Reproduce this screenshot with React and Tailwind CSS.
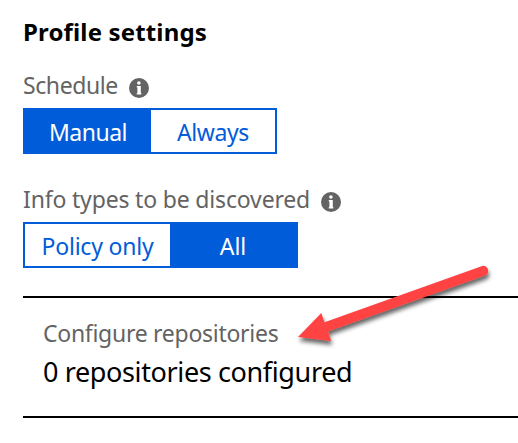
function InfoIcon() {
  return (
    <svg className="block h-5 w-5 shrink-0" viewBox="0 0 20 20">
      <circle cx="10" cy="10" r="10" fill="#636363" />
      <circle cx="9.9" cy="5" r="1.8" fill="#fff" />
      <path d="M7.8 8H11.8v7h.5v1.6H7.8V15h.6V9.5h-.6z" fill="#fff" />
    </svg>
  );
}

export default function App() {
  return (
    <main className="relative h-[443px] w-[518px] overflow-hidden bg-white pl-[23px] font-['Noto_Sans',sans-serif] whitespace-nowrap">
      <h1 className="pt-4 text-[24px] leading-8 font-bold tracking-[0.15px] text-black">Profile settings</h1>

      <div className="mt-[21px] flex h-8 items-center gap-[11px] text-[#636363]">
        <span className="w-[95px] text-[23px] leading-8 tracking-[-0.4px]">Schedule</span>
        <span className="pt-[6px]"><InfoIcon /></span>
      </div>
      <div className="mt-[7px] flex h-[46px] w-[254px] border-2 border-[#015cda] text-[23px] leading-[44px]">
        <div className="w-[126px] bg-[#015cda] text-center tracking-[-0.5px] text-white">Manual</div>
        <div className="flex-1 text-center tracking-[-0.4px] text-[#015cda]">Always</div>
      </div>

      <div className="mt-[29px] flex h-8 items-center gap-[11px] text-[#636363]">
        <span className="w-[287px] text-[23px] leading-8 tracking-[-0.17px]">Info types to be discovered</span>
        <span className="pt-[6px]"><InfoIcon /></span>
      </div>
      <div className="mt-[7px] flex h-[46px] w-[275px] border-2 border-[#015cda] text-[23px] leading-[44px]">
        <div className="w-[145px] text-center tracking-[-0.2px] text-[#015cda]">Policy only</div>
        <div className="flex-1 bg-[#015cda] text-center text-white">All</div>
      </div>

      <section className="mt-7 h-[122px] border-y-2 border-black pt-[19px] pl-5">
        <div className="text-[23px] leading-8 tracking-[-0.28px] text-[#636363]">Configure repositories</div>
        <div className="mt-[5px] text-[27px] leading-9 tracking-[-0.37px] text-black">0 repositories configured</div>
      </section>

      <svg className="absolute top-[250px] left-[280px] h-[110px] w-[238px]" viewBox="280 250 238 110">
        <defs>
          <filter id="arrow-shadow" x="-10%" y="-20%" width="120%" height="150%">
            <feDropShadow dx="1" dy="4" stdDeviation="2.2" floodColor="#000" floodOpacity="0.6" />
          </filter>
        </defs>
        <path
          d="M298 337L321.3 313L324.5 322.2L481.5 266.2A5 5 0 0 1 485 275.6L328 331.6L331.2 341Z"
          fill="#ff4343"
          filter="url(#arrow-shadow)"
        />
      </svg>
    </main>
  );
}
